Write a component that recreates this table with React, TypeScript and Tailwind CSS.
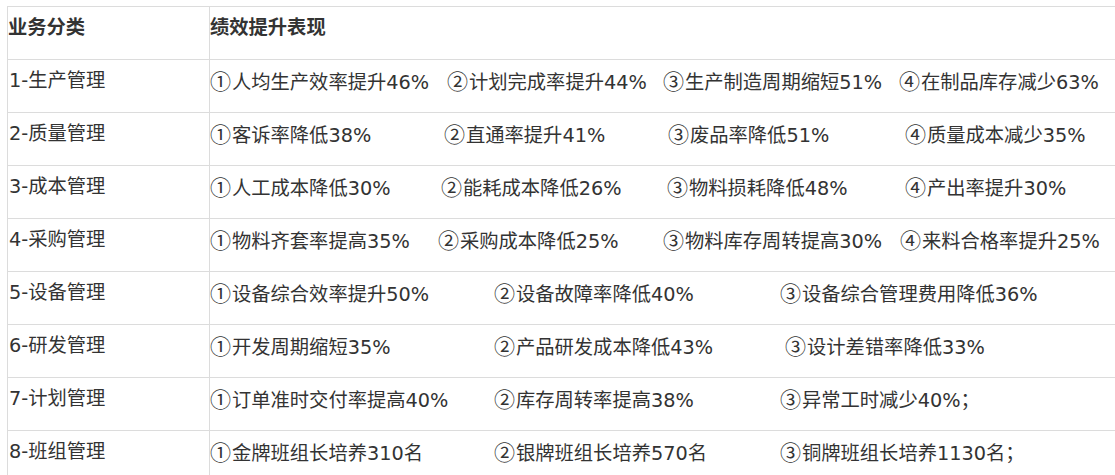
import React from "react";

type Row = { name: string; items: string[]; widths: number[] };

const rows: Row[] = [
  { name: "1-生产管理", items: ["①人均生产效率提升46%", "②计划完成率提升44%", "③生产制造周期缩短51%", "④在制品库存减少63%"], widths: [237, 216, 236] },
  { name: "2-质量管理", items: ["①客诉率降低38%", "②直通率提升41%", "③废品率降低51%", "④质量成本减少35%"], widths: [234, 224, 237] },
  { name: "3-成本管理", items: ["①人工成本降低30%", "②能耗成本降低26%", "③物料损耗降低48%", "④产出率提升30%"], widths: [231, 226, 238] },
  { name: "4-采购管理", items: ["①物料齐套率提高35%", "②采购成本降低25%", "③物料库存周转提高30%", "④来料合格率提升25%"], widths: [228, 225, 237] },
  { name: "5-设备管理", items: ["①设备综合效率提升50%", "②设备故障率降低40%", "③设备综合管理费用降低36%"], widths: [284, 286] },
  { name: "6-研发管理", items: ["①开发周期缩短35%", "②产品研发成本降低43%", "③设计差错率降低33%"], widths: [284, 291] },
  { name: "7-计划管理", items: ["①订单准时交付率提高40%", "②库存周转率提高38%", "③异常工时减少40%；"], widths: [284, 286] },
  { name: "8-班组管理", items: ["①金牌班组长培养310名", "②银牌班组长培养570名", "③铜牌班组长培养1130名；"], widths: [284, 286] },
];

function Item({ text }: { text: string }) {
  const mark = text.slice(0, 1);
  const rest = text.slice(1);
  return (
    <>
      <span
        className="inline-block w-[22px] text-[21px] leading-[29px]"
        style={{ fontFamily: '"Noto Sans CJK SC", sans-serif' }}
      >
        {mark}
      </span>
      {rest}
    </>
  );
}

export default function App() {
  return (
    <div
      className="w-[1115px] h-[475px] overflow-hidden bg-white text-[#333] pt-[6px] pl-[7px]"
      style={{ fontFamily: '"DejaVu Sans", "Noto Sans CJK SC", sans-serif' }}
    >
      <div className="w-[1200px] border-l border-t border-[#dcdcdc]">
        <div className="flex h-[53px] border-b border-[#dcdcdc]">
          <div className="w-[202px] shrink-0 border-r border-[#dcdcdc] pt-[6px] text-[19.3px] leading-[29px] font-bold">
            业务分类
          </div>
          <div className="flex-1 pt-[6px] text-[19.3px] leading-[29px] font-bold">绩效提升表现</div>
        </div>
        {rows.map((r) => (
          <div key={r.name} className="flex h-[53px] border-b border-[#dcdcdc]">
            <div className="w-[202px] shrink-0 border-r border-[#dcdcdc] pt-[6px] pl-[1px] text-[19.3px] leading-[29px]">
              {r.name}
            </div>
            <div className="flex flex-1 pt-[6px] text-[19.3px] leading-[29px] whitespace-nowrap">
              {r.items.map((it, i) => (
                <span
                  key={i}
                  className="shrink-0"
                  style={i < r.widths.length ? { width: r.widths[i] } : undefined}
                >
                  <Item text={it} />
                </span>
              ))}
            </div>
          </div>
        ))}
      </div>
    </div>
  );
}
